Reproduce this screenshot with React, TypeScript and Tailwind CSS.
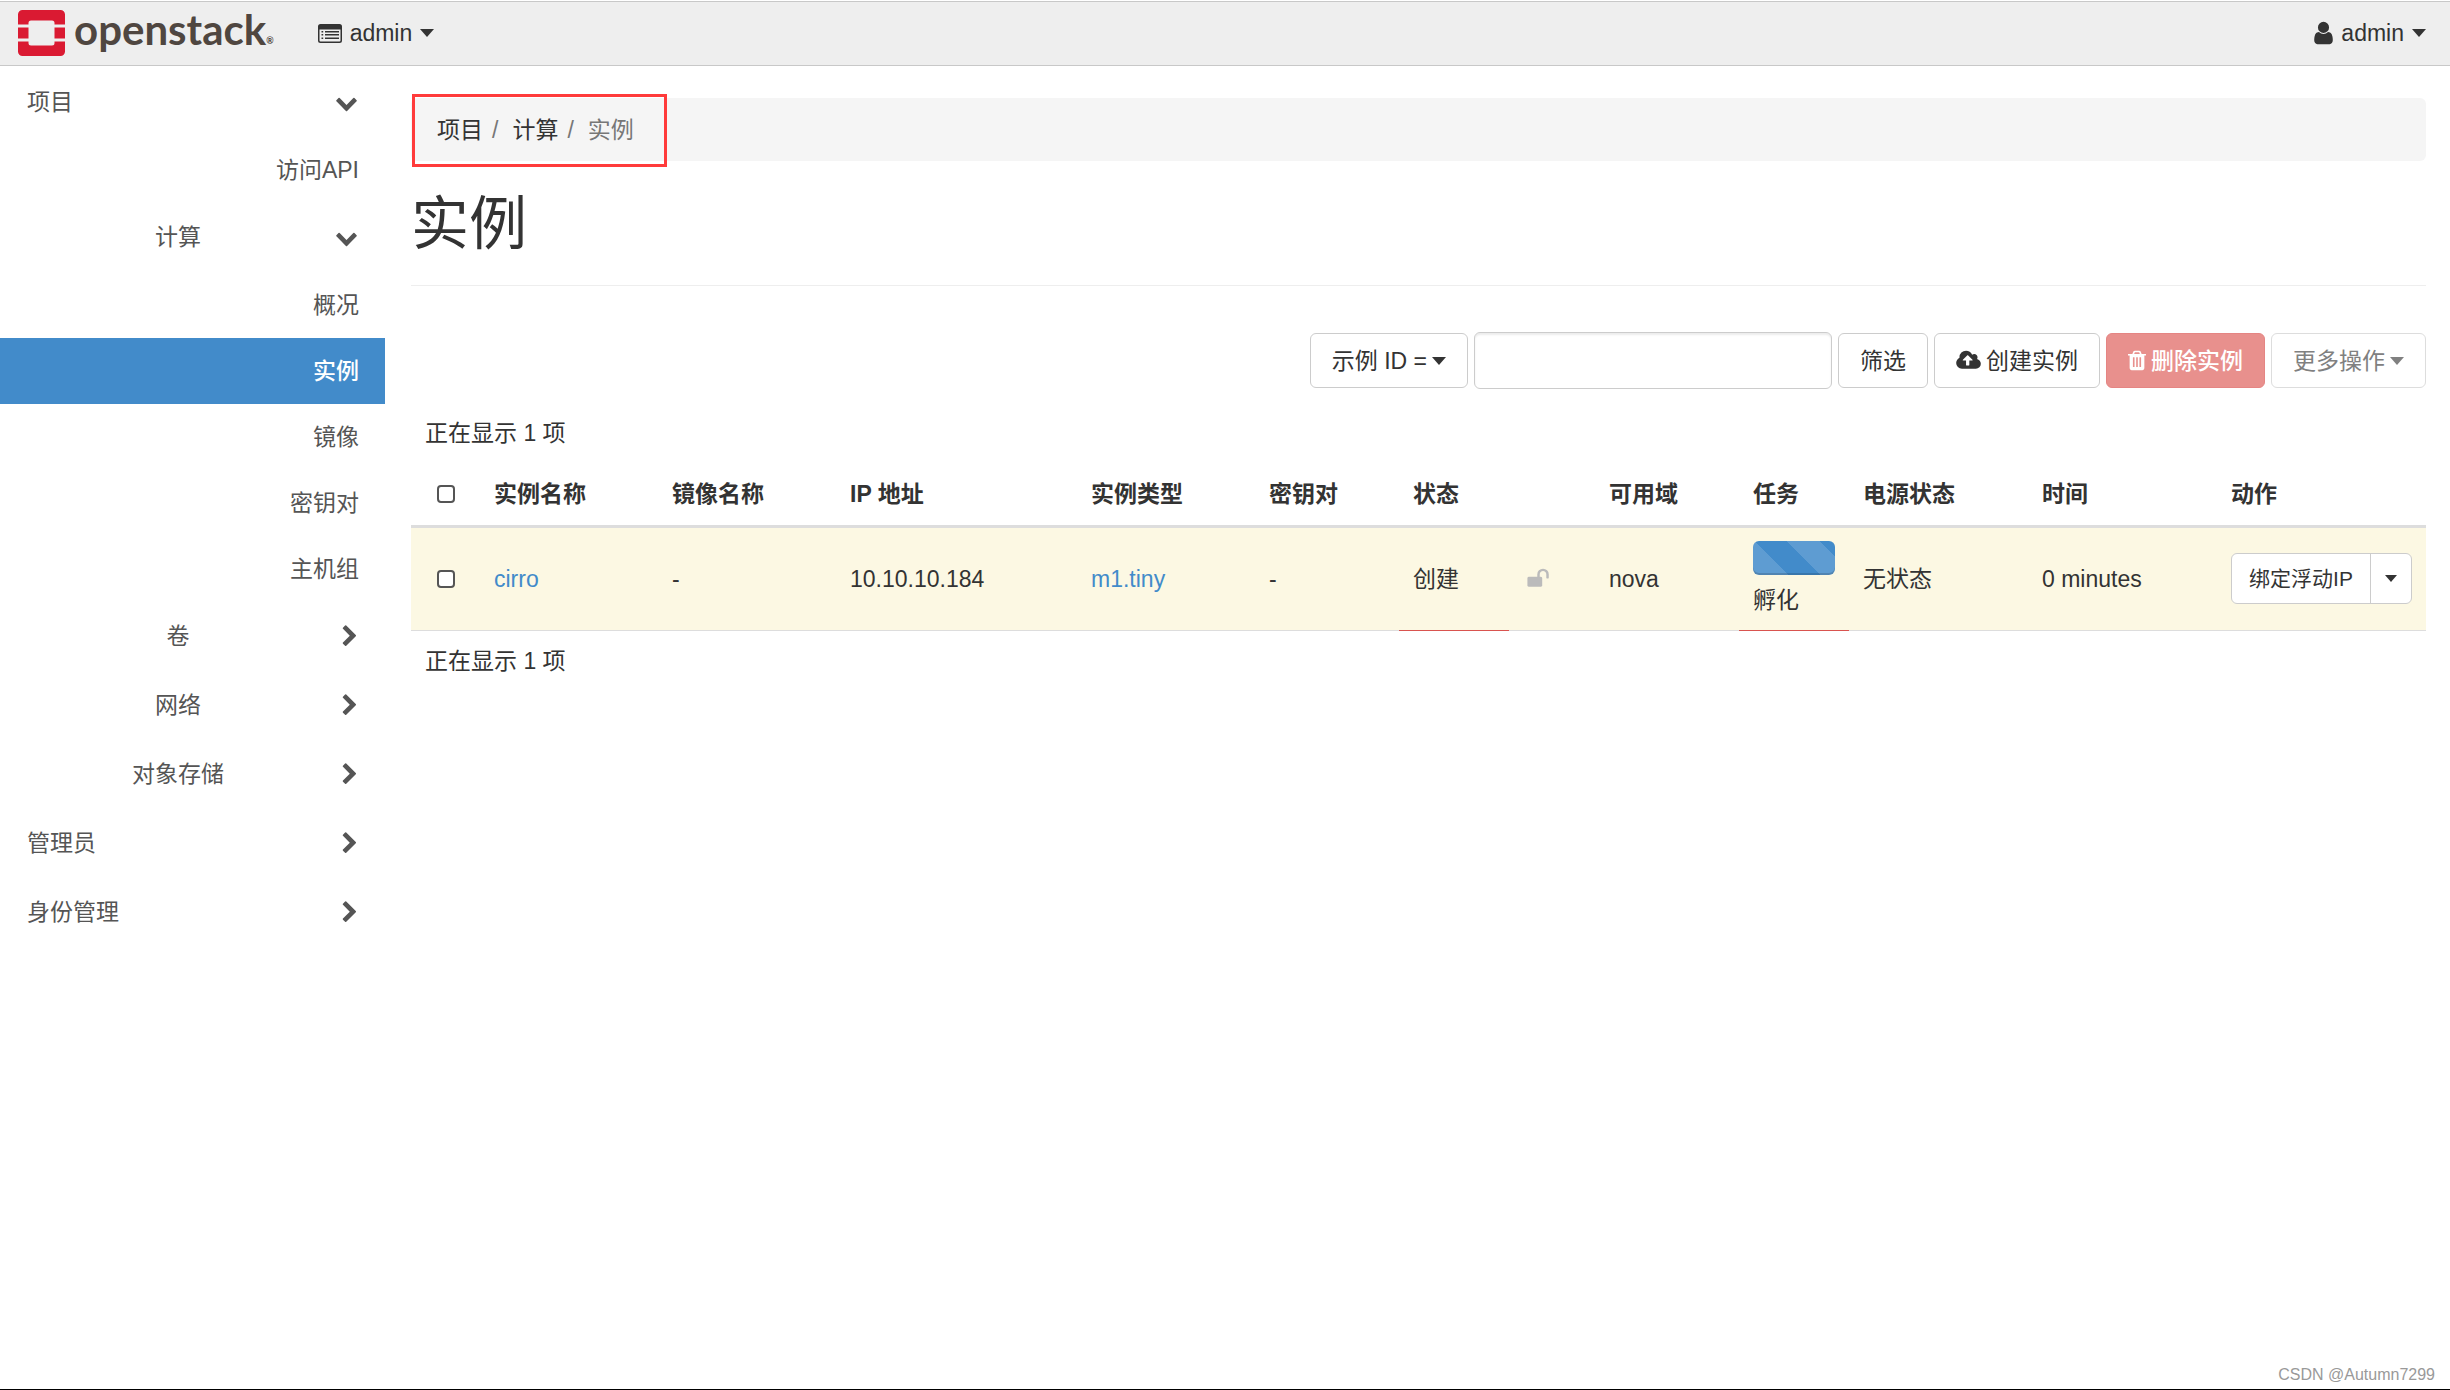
import type { ReactNode } from "react";

const ICONS = {
  chevronDown: {
    box: "0 0 1792 1792",
    d: "M1683 808l-742 741q-19 19-45 19t-45-19l-742-741q-19-19-19-45.5t19-45.5l166-165q19-19 45-19t45 19l531 531 531-531q19-19 45-19t45 19l166 165q19 19 19 45.5t-19 45.5z",
  },
  chevronRight: {
    box: "-256 0 1792 1792",
    d: "M1363 877l-742 742q-19 19-45 19t-45-19l-166-166q-19-19-19-45t19-45l531-531-531-531q-19-19-19-45t19-45l166-166q19-19 45-19t45 19l742 742q19 19 19 45t-19 45z",
  },
  user: {
    box: "256 0 1280 1792",
    d: "M1536 1399q0 109-62.5 187t-150.5 78h-854q-88 0-150.5-78t-62.5-187q0-85 8.5-160.5t31.5-152 58.5-131 94-89 134.5-34.5q131 128 313 128t313-128q76 0 134.5 34.5t94 89 58.5 131 31.5 152 8.5 160.5zm-256-887q0 159-112.5 271.5t-271.5 112.5-271.5-112.5-112.5-271.5 112.5-271.5 271.5-112.5 271.5 112.5 112.5 271.5z",
  },
  upload: {
    box: "-64 0 1920 1792",
    d: "M1216 864q0-14-9-23l-352-352q-9-9-23-9t-23 9l-351 351q-10 12-10 24 0 14 9 23t23 9h224v352q0 13 9.5 22.5t22.5 9.5h192q13 0 22.5-9.5t9.5-22.5v-352h224q13 0 22.5-9.5t9.5-22.5zm640 288q0 159-112.5 271.5t-271.5 112.5h-1088q-185 0-316.5-131.5t-131.5-316.5q0-130 70-240t188-165q-2-30-2-43 0-212 150-362t362-150q156 0 285.5 87t188.5 231q71-62 166-62 106 0 181 75t75 181q0 76-41 138 130 31 213.5 135.5t83.5 238.5z",
  },
  trash: {
    box: "192 0 1408 1792",
    d: "M704 1376v-704q0-14-9-23t-23-9h-64q-14 0-23 9t-9 23v704q0 14 9 23t23 9h64q14 0 23-9t9-23zm256 0v-704q0-14-9-23t-23-9h-64q-14 0-23 9t-9 23v704q0 14 9 23t23 9h64q14 0 23-9t9-23zm256 0v-704q0-14-9-23t-23-9h-64q-14 0-23 9t-9 23v704q0 14 9 23t23 9h64q14 0 23-9t9-23zm-544-992h448l-48-117q-7-9-17-11h-317q-10 2-17 11zm928 32v64q0 14-9 23t-23 9h-96v948q0 83-47 143.5t-113 60.5h-832q-66 0-113-58.5t-47-141.5v-952h-96q-14 0-23-9t-9-23v-64q0-14 9-23t23-9h309l70-167q15-37 54-63t79-26h320q40 0 79 26t54 63l70 167h309q14 0 23 9t9 23z",
  },
  unlock: {
    box: "64 0 1728 1792",
    d: "M1728 576v256q0 26-19 45t-45 19h-64q-26 0-45-19t-19-45v-256q0-106-75-181t-181-75-181 75-75 181v192h96q40 0 68 28t28 68v576q0 40-28 68t-68 28h-960q-40 0-68-28t-28-68v-576q0-40 28-68t68-28h672v-192q0-185 131.5-316.5t316.5-131.5 316.5 131.5 131.5 316.5z",
  },
};

function Icon({ name, className }: { name: keyof typeof ICONS; className: string }) {
  return (
    <svg aria-hidden="true" viewBox={ICONS[name].box} className={className} fill="currentColor">
      <path d={ICONS[name].d} />
    </svg>
  );
}

function Caret({ small = false }: { small?: boolean }) {
  return (
    <svg aria-hidden="true" viewBox="0 0 14 8" className={small ? "h-[7px] w-3" : "h-2 w-3.5"} fill="currentColor">
      <path d="M0 0h14L7 8z" />
    </svg>
  );
}

function ListIcon() {
  return (
    <svg aria-hidden="true" viewBox="0 0 24 19" className="h-[19px] w-6" fill="currentColor">
      <path
        fillRule="evenodd"
        d="M2.5 0h19A2.5 2.5 0 0 1 24 2.5v14a2.5 2.5 0 0 1-2.5 2.5h-19A2.5 2.5 0 0 1 0 16.5v-14A2.5 2.5 0 0 1 2.5 0zM1.5 5.5v11q0 1 1 1h19q1 0 1-1v-11z"
      />
      <path d="M3.5 7h1.7v1.5H3.5zM3.5 10h1.7v1.5H3.5zM3.5 13.5h1.7V15H3.5zM7 7h14v1.5H7zM7 10h14v1.5H7zM7 13.5h14V15H7z" />
    </svg>
  );
}

function Logo() {
  return (
    <a href="#" className="flex items-center gap-[9px] text-[#4f4640]">
      <svg aria-hidden="true" viewBox="0 0 47 46" className="h-[46px] w-[47px]" fill="#da1a32">
        <path d="M4.5 0h38A4.5 4.5 0 0 1 47 4.5V14.5H36.5V13a2.5 2.5 0 0 0-2.5-2.5H13a2.5 2.5 0 0 0-2.5 2.5v1.5H0v-10A4.5 4.5 0 0 1 4.5 0z" />
        <path d="M0 17.5h10.5v11H0zM36.5 17.5H47v11H36.5z" />
        <path d="M0 31.5h10.5V33a2.5 2.5 0 0 0 2.5 2.5h21a2.5 2.5 0 0 0 2.5-2.5v-1.5H47v10a4.5 4.5 0 0 1-4.5 4.5h-38A4.5 4.5 0 0 1 0 41.5z" />
      </svg>
      <span className="flex items-end pb-2 font-[Lato,sans-serif] font-bold">
        <span className="text-[42px] leading-[52px]">openstack</span>
        <span className="pb-2 text-[9px] leading-[12px]">®</span>
      </span>
    </a>
  );
}

type NavEntry = { label: string; level: 1 | 2 | 3; open?: boolean; active?: boolean };

const NAV: NavEntry[] = [
  { label: "项目", level: 1, open: true },
  { label: "访问API", level: 3 },
  { label: "计算", level: 2, open: true },
  { label: "概况", level: 3 },
  { label: "实例", level: 3, active: true },
  { label: "镜像", level: 3 },
  { label: "密钥对", level: 3 },
  { label: "主机组", level: 3 },
  { label: "卷", level: 2 },
  { label: "网络", level: 2 },
  { label: "对象存储", level: 2 },
  { label: "管理员", level: 1 },
  { label: "身份管理", level: 1 },
];

function NavRow({ entry }: { entry: NavEntry }) {
  if (entry.level === 3) {
    return (
      <a
        href="#"
        className={
          entry.active
            ? "flex h-[66px] items-center justify-end bg-[#428bca] px-[26px] font-medium text-white"
            : "flex h-[66px] items-center justify-end px-[26px]"
        }
      >
        {entry.label}
      </a>
    );
  }
  return (
    <button type="button" aria-expanded={!!entry.open} className="flex h-[69px] w-full items-center px-[27px] pb-px">
      <span className={entry.level === 2 ? "flex-1 text-center" : "flex-1 text-left"}>{entry.label}</span>
      <span className="flex w-[29px] justify-end">
        <Icon name={entry.open ? "chevronDown" : "chevronRight"} className="size-[23px]" />
      </span>
    </button>
  );
}

function Button({ children, className = "border-[#ccc] bg-white", disabled = false }: { children: ReactNode; className?: string; disabled?: boolean }) {
  return (
    <button type="button" disabled={disabled} className={"flex h-[55px] items-center gap-[5px] rounded-md border px-[21px] whitespace-nowrap " + className}>
      {children}
    </button>
  );
}

const COLUMNS = [
  { label: "实例名称", width: "w-[178px]" },
  { label: "镜像名称", width: "w-[178px]" },
  { label: "IP 地址", width: "w-[241px]" },
  { label: "实例类型", width: "w-[178px]" },
  { label: "密钥对", width: "w-[144px]" },
  { label: "状态", width: "w-[110px]" },
  { label: "", width: "w-[86px]" },
  { label: "可用域", width: "w-[144px]" },
  { label: "任务", width: "w-[110px]" },
  { label: "电源状态", width: "w-[179px]" },
  { label: "时间", width: "w-[189px]" },
  { label: "动作", width: "w-[209px]" },
];

function Checkbox({ label }: { label: string }) {
  return (
    <input
      type="checkbox"
      aria-label={label}
      className="mx-auto block size-[18px] appearance-none rounded-[4px] border-2 border-[#555] bg-white checked:bg-[#428bca]"
    />
  );
}

function InstanceTable() {
  return (
    <table className="w-full table-fixed text-left">
      <thead>
        <tr className="h-[63px] border-b-[3px] border-[#ddd]">
          <th className="w-[69px] px-3.5">
            <Checkbox label="全选" />
          </th>
          {COLUMNS.map((c, i) => (
            <th key={i} className={"px-3.5 font-bold whitespace-nowrap " + c.width}>
              {c.label}
            </th>
          ))}
        </tr>
      </thead>
      <tbody>
        <tr className="h-[104px] border-b border-[#ddd] bg-[#fcf8e3]">
          <td className="px-3.5">
            <Checkbox label="cirro" />
          </td>
          <td className="px-3.5">
            <a href="#" className="text-[#428bca]">cirro</a>
          </td>
          <td className="px-3.5">-</td>
          <td className="px-3.5">10.10.10.184</td>
          <td className="px-3.5">
            <a href="#" className="text-[#428bca]">m1.tiny</a>
          </td>
          <td className="px-3.5">-</td>
          <td className="border-b border-[#d9534f] px-3.5">创建</td>
          <td className="px-[18px]">
            <Icon name="unlock" className="size-[23px] text-[#bbb]" />
          </td>
          <td className="px-3.5">nova</td>
          <td className="border-b border-[#d9534f] px-3.5">
            <div
              role="progressbar"
              aria-label="孵化"
              className="mb-[9px] h-[34px] rounded-md bg-[#428bca] bg-[linear-gradient(45deg,rgba(255,255,255,.15)_25%,transparent_25%,transparent_50%,rgba(255,255,255,.15)_50%,rgba(255,255,255,.15)_75%,transparent_75%,transparent)] bg-[length:65px_65px] bg-[position:34px_0] shadow-[inset_0_-2px_0_rgba(0,0,0,0.15)]"
            />
            孵化
          </td>
          <td className="px-3.5">无状态</td>
          <td className="px-3.5">0 minutes</td>
          <td className="px-3.5">
            <div className="flex h-[51px] w-full rounded-md border border-[#ccc] bg-white text-[21px]">
              <button type="button" className="flex-1 border-r border-[#ccc] whitespace-nowrap">
                绑定浮动IP
              </button>
              <button type="button" aria-label="更多" className="flex w-10 items-center justify-center">
                <Caret small />
              </button>
            </div>
          </td>
        </tr>
      </tbody>
    </table>
  );
}

export default function App() {
  return (
    <div className="flex min-h-screen flex-col border-b border-black bg-white pt-px font-['Liberation_Sans','Noto_Sans_CJK_SC',sans-serif] text-[23px] leading-8 text-[#333]">
      <header className="flex h-[65px] items-center justify-between border-y border-[#c8c8c8] bg-[#eee] pr-6 pb-px pl-[18px]">
        <div className="flex h-full items-center gap-11">
          <Logo />
          <button type="button" className="flex items-center gap-2">
            <ListIcon />
            admin
            <Caret />
          </button>
        </div>
        <button type="button" className="flex items-center gap-2">
          <Icon name="user" className="h-[26px] w-[19px]" />
          admin
          <Caret />
        </button>
      </header>

      <div className="flex flex-1">
        <nav className="w-[385px] shrink-0 pt-0.5 text-[#555]">
          {NAV.map((entry) => (
            <NavRow key={entry.label} entry={entry} />
          ))}
        </nav>

        <main className="min-w-0 flex-1 pt-8 pr-6 pl-[26px]">
          <nav aria-label="breadcrumb" className="relative rounded-md bg-[#f5f5f5] px-[26px]">
            <ol className="flex h-[63px] items-center gap-[9px]">
              <li><a href="#">项目</a></li>
              <li className="flex gap-3.5 text-[#777]">/ <a href="#" className="text-[#333]">计算</a></li>
              <li className="flex gap-3.5 text-[#777]">/ <span aria-current="page">实例</span></li>
            </ol>
            <div className="absolute -top-1 left-px h-[73px] w-[255px] border-[3px] border-[#ff3b3b]" />
          </nav>

          <h1 className="mt-[30px] border-b border-[#eee] pb-7 text-[58px] leading-[66px]">实例</h1>

          <div className="mt-[46px] flex items-center justify-end gap-1.5">
            <Button>示例 ID = <Caret /></Button>
            <input
              type="text"
              aria-label="筛选条件"
              className="h-[57px] w-[358px] rounded-md border border-[#ccc] bg-white px-5 shadow-[inset_0_2px_2px_rgba(0,0,0,0.08)]"
            />
            <Button>筛选</Button>
            <Button>
              <Icon name="upload" className="h-[23px] w-[25px]" />
              创建实例
            </Button>
            <Button disabled className="border-[#e58583] bg-[#e8908d] font-medium text-white">
              <Icon name="trash" className="h-[23px] w-[18px]" />
              删除实例
            </Button>
            <Button disabled className="border-[#ddd] bg-white text-[#808080]">更多操作 <Caret /></Button>
          </div>

          <p className="mt-7 px-3.5">正在显示 1 项</p>
          <div className="mt-3.5">
            <InstanceTable />
          </div>
          <p className="mt-3.5 px-3.5">正在显示 1 项</p>
        </main>
      </div>

      <footer className="pr-[15px] pb-1 text-right text-[16px] leading-5 text-[#999]">CSDN @Autumn7299</footer>
    </div>
  );
}
